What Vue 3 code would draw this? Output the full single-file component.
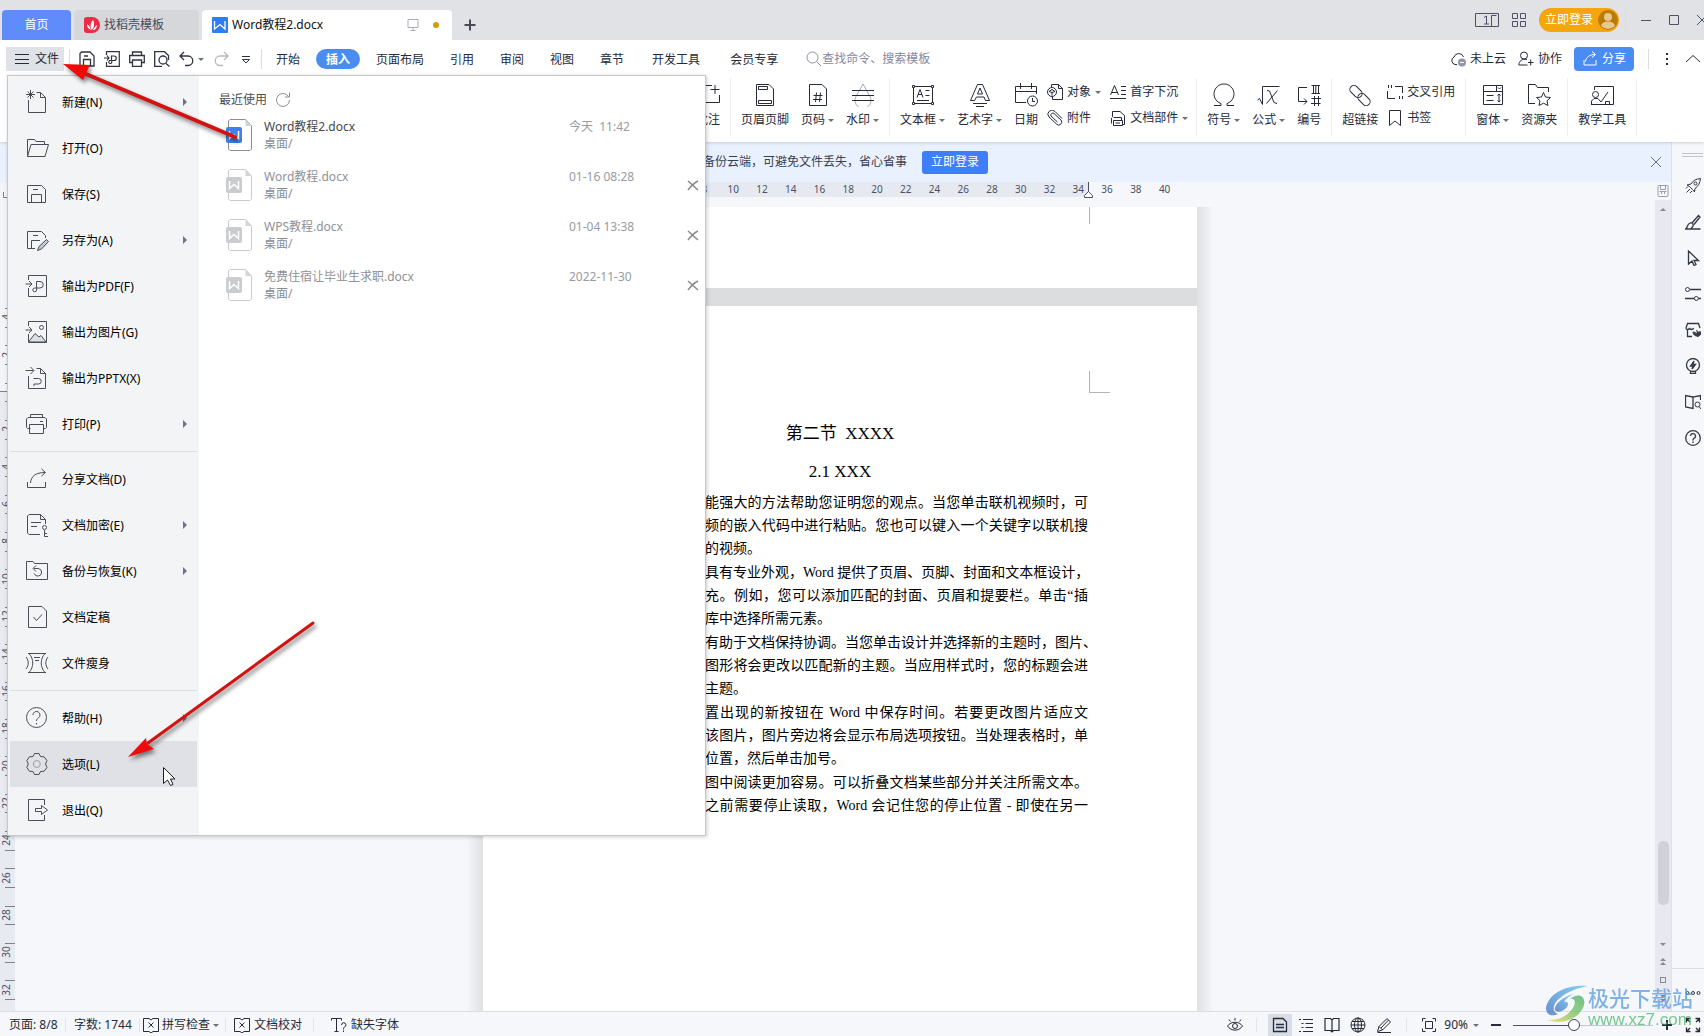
<script setup>
import { h } from 'vue'

const box = 'M3.5 6V1.5H21.5V22.5H3.5V14M.5 10H7M4 7L7 10L4 13'
const icons = {
  // file menu, 24px grid
  new: '<path d="M3.5 10V22.5H20.5V7.5L15.5 2.5H11.5M15.5 2.5V7.5H20.5M5.5 0V9M1 4.5H10M2.5 1.5L8.5 7.5M8.5 1.5L2.5 7.5"/>',
  open: '<path d="M2.5 20.5V3.5H9.5L11 5.5H19.5V8.5M2.5 20.5L6 8.5H23.5L20 20.5Z"/>',
  save: '<path d="M2.5 3.5H16.5L20.5 7.5V20.5H2.5ZM6.5 20.5V12.5H16.5V20.5M8 7.5H13"/>',
  saveas: '<path d="M10 20.5H2.5V3.5H16.5L20.5 7.5V10M6.5 20.5V12.5H15M8 7.5H13"/><path fill="#c5cad6" d="M12.5 22.5L14 18.5L21.5 11.5L23.5 13.5L16.5 21Z"/>',
  pdf: `<path d="${box}M11.5 13V7.5H15a3 3 0 0 1 0 6.5H9.8a1.9 1.9 0 1 0 1.8 2V13"/>`,
  pic: `<path fill="#dcdfe3" d="M3.5 22L10 13.5L14 17L16 15.5L21 22Z"/><path d="${box}"/><circle cx="16.5" cy="7.5" r="2"/>`,
  pptx: '<path d="M3.5 10V22.5H20.5V7.5L15.5 2.5H11.5M15.5 2.5V7.5H20.5M.5 4.5H8.5M5.5 1L9 4.5L5.5 8M8.5 12.5H13.5a2.500 2.500 0 0 1 0 5.500H9V20"/>',
  print: '<path d="M5.5 6V2.5H17.5V6M5.5 16.5H2.5L1.5 15.5V7L3 5.5H20L21.5 7V15.5L20.5 16.5H18.5M4.5 12.5H18.5V21.5H4.5ZM15 9.5H18"/>',
  share: '<path d="M2.5 15V20.5H20.5V15M5.5 16C6 9 11 5.5 20 5.5M16.5 2L20.5 5.5L16.5 9"/>',
  lock: '<path d="M15 21.5H4L2.5 20V3L4 1.5H15.5L20.5 6.5V11M15.5 1.5V6.5H20.5M6 9.5H16M6 13.5H12M19.5 17V23.5H23M19.5 20.5H22"/><circle cx="19.5" cy="14.5" r="2"/>',
  backup: '<path d="M1.5 20.5V2.5H8L9.5 4.5H22.5V20.5ZM9 9.500H13a3.800 3.800 0 1 1-3.800 5M11 6.500L8 9.500L11 12.500"/>',
  final: '<path d="M3.5 1.5H17L21.5 6V22.5H3.5ZM8.5 12L11.5 15.5L17 9.5"/>',
  slim: '<path d="M3 2.5H21M3 21.5H21M4 2.5C9 8 9 16 4 21.5M20 2.5C15 8 15 16 20 21.5M1 6C4 10 4 14 1 18M23 6C20 10 20 14 23 18M9 6.5H15M10 9.5H14"/>',
  help: '<circle cx="11.5" cy="11.5" r="10"/><path d="M8 9a3.5 3.5 0 1 1 5.5 2.8C12 13 11.5 13.5 11.500 15M11.500 17V18.500"/>',
  gear: '<path d="M9.500 1.500H14L15.500 4.500L19 4.800L22 8.500L20.500 12L22 15.500L19 19.300L15.500 19.500L14 22.500H9.500L8 19.500L4.500 19.300L1.800 15.500L3.300 12L1.800 8.500L4.500 4.800L8 4.500Z"/><circle cx="11.800" cy="12" r="3.500" stroke="#9a9ea6"/>',
  exit: '<path d="M19.500 7V1.500H3.500V22.500H19.500V17M10.500 10.500H16.500V7.500L22.500 12L16.500 16.500V13.500H10.500Z"/>',
  // ribbon, 24px grid
  note: '<path d="M16 2.500H1.500V19.500H23.500V12M14.500 6.500H23.500M19 2V11"/>',
  headfoot: '<path d="M3.500 1.500H16L20.500 6V22.500H3.500ZM5.500 3.500H14.500V6.500H5.500ZM5.500 17.500H18.500V20.500H5.500Z"/>',
  pageno: '<path d="M3.500 1.500H16L20.500 6V22.500H3.500ZM10.500 9.500L9.500 19M14.500 9.500L13.500 19M7.500 12.500H16.500M7 16.500H16"/>',
  water: '<path stroke="#a3a6ad" d="M12 1L19 13.500a8 8 0 1 1-14 0Z"/><path d="M1 7.500H23M1 12.500H23M1 17.500H23"/>',
  textbox: '<path d="M2.500 3.500H21.500V20.500H2.500ZM6 14.500L9 6.500L12 14.500M7 11.500H11M14.500 7.500H18.500M14.500 12.500H18.500M6 17.500H18"/><path fill="#fff" d="M1.500 2.500h2v2h-2zM20.500 2.500h2v2h-2zM1.500 19.500h2v2h-2zM20.500 19.500h2v2h-2z"/>',
  art: '<path d="M9.500 1.500H14.500L21.500 17.500H17.500L16 14H8.500L6.500 17.500H2.500ZM12 5L9.500 11H14.500ZM5 20.500H19M8 23.500H16"/>',
  date: '<path d="M12 19.500H1.500V3.500H22.500V11M1.500 8.500H22.500M6.500 0V6M17.500 0V6M18.500 15V18.500H21"/><circle cx="18.500" cy="18" r="5"/>',
  omega: '<path d="M2 22.500H9V20.500A10 10 0 1 1 15 20.500V22.500H22"/>',
  formula: '<path d="M.5 17L2.500 15.500L5.500 21.500V3.500H22.500M10 7.500L12.500 8L17 19.500L20 20.500M20.500 7.500L9.500 20.500"/>',
  number: '<path d="M10 4.500H1.500V18.500H10M7 15.500L10 18.500L7 21.500M14.500 2.500H23M14.500 10.500H23M16.500 2.500V10.500M18.800 2.500V10.500M21.500 2.500V10.500M17.500 13V23M21.500 13V23M14.500 15.500H24M14 20.500H23.500"/>',
  link: '<rect x="-4" y="-7" width="8" height="14" rx="4" transform="translate(8 8.500) rotate(-45)"/><rect x="-4" y="-7" width="8" height="14" rx="4" transform="translate(16 16.500) rotate(-45)"/>',
  form: '<path d="M2.500 2.500H21.500V21.500H2.500ZM2.500 8.500H21.500M15.500 2.500V8.500M17 4.500L18.500 6L20 4.500M5.500 12.500H12.500M5.500 17.500H12.500M18 11.500V19M16.500 12.500L18 11L19.500 12.500M16.500 17.500L18 19L19.500 17.500"/>',
  res: '<path d="M8 20.500H1.500V1.500H8.500L10.500 4.500H21.500V9M16.500 9.500L18.500 14L23.500 14.500L20 17.800L21 22.500L16.500 20.200L12 22.500L13 17.800L9.500 14.500L14.500 14Z"/>',
  teach: '<path d="M4.500 7V3.500H23.500V21.500H12M1.500 21.500V18L4 15.500H8L11 19L18 9M15.500 21V18.500H19.500V21M1 21.500H12"/><circle cx="5.500" cy="11.500" r="3"/>',
  // 16px grid
  object: '<path d="M4.500 3V.5H11.500L15.500 4.500V15.500H5.500V13M11.500 .5V4.500H15.500M5 5.500L2 7.500M5 5.500L8 7.500M5 8.500V11.500M5 8.500L2 7.500M5 8.500L8 7.500"/><circle cx="5" cy="8" r="4.500"/>',
  clip: '<path d="M15 8.500L8 1.500A4 4 0 0 0 2 7L9.500 14A3 3 0 0 0 14 10L7 3.500A2 2 0 0 0 4 6L10.500 12"/>',
  dropcap: '<path d="M.5 11L4.500 1.500L8.500 11M2 8.500H7M11 2.500H16M11 6.500H16M11 10.500H16M0 14.500H16"/>',
  parts: '<path d="M2.500 7V1.500H10L14.500 5.500V14.500H12M3.500 7.500H11.500V10M3.500 10.500V15.500H12.500V10.500ZM1.500 8V13.500M5.500 13H10"/>',
  cross: '<path d="M8 2.500H15.500V9M.5 7V14.500H8M1.500 1V4M4.500 1V4M12.500 12V15M15.500 12V15"/>',
  bookmark: '<path d="M2.500 .5H13.500V15.500L8 11L2.500 15.500Z"/>',
  qsave: '<path d="M1 2.500L2.500 1H11L15 5V15H1ZM4.500 15V8.500H11.500V15M5 5H9" stroke-width="1.300"/>',
  qpdf: '<path d="M2.500 4V.7H15.300V15.300H2.500V11M0 7H5M3 4.500L5 7L3 9.500M7.500 9V5H10a2 2 0 0 1 0 4.500H6.500a1.500 1.500 0 1 0 1.300 1.500V9" stroke-width="1.200"/>',
  qprint: '<path d="M3.500 4.500V1H12.500V4.500M3.500 11.500H.7V4.500H15.300V11.500H12.500M3.500 9H12.500V15.300H3.500Z" stroke-width="1.300"/>',
  preview: '<path d="M8 15.300H.7V.7H10.500L14.500 4.500V9M12 12.500L15.500 15.500" stroke-width="1.300"/><circle cx="9" cy="9" r="4" stroke-width="1.300"/>',
  undo: '<path d="M5 1L1 5L5 9M1.500 5H9a4.500 4.500 0 0 1 0 9.500H6" stroke-width="1.300"/>',
  redo: '<path d="M11 1L15 5L11 9M14.500 5H7a4.500 4.500 0 0 0 0 9.500H10" stroke-width="1.300"/>',
  more: '<path d="M4 5.500H12M4.500 8.500H11.500L8 12Z"/>',
  burger: '<path d="M1 3.500H15M1 8.500H15M1 12.500H15"/>',
  search: '<circle cx="6.500" cy="6.500" r="5.500"/><path d="M10.500 10.500L15 15"/>',
  cloud: '<path d="M7 13.500H5A4 4 0 0 1 4 6A5 5 0 0 1 13.500 6"/><circle cx="12" cy="11.500" r="4" fill="#9095a8" stroke="none"/><path stroke="#fff" d="M10 11.500H14"/>',
  coop: '<circle cx="6" cy="4.500" r="3.500"/><path d="M9 8.500C4 7.500 1 10 .8 14H9.500M10 11.500H15.500M12.700 8.500V14.500"/>',
  shareup: '<path d="M2 9V14H14V9M3.500 10.500C4 6 8 3.500 13 3.500M10 .5L13.500 3.500L10 6.500"/>',
  dots: '<path stroke-width="2" d="M7 3H9M7 8H9M7 13H9"/>',
  up: '<path d="M1 11L8 4.500L15 11"/>',
  plus: '<path stroke-width="2" d="M2.500 8H13.500M8 2.500V13.500"/>',
  splus: '<path stroke-width="2" d="M3 8H13M8 3V13"/>',
  sminus: '<path stroke-width="2" d="M3 8H13"/>',
  screen: '<path d="M3 2.500H13V10.500H3ZM8 10.500V13.500M5.500 13.500H10.500"/>',
  apps: '<path d="M1.500 1.500h5v5h-5zM9.500 1.500h5v5h-5zM1.500 9.500h5v5h-5zM9.500 9.500h5v5h-5z"/>',
  min: '<path d="M3 8.500H13"/>',
  max: '<path d="M3.500 3.500H12.500V12.500H3.500Z"/>',
  close: '<path d="M3 3L13 13M13 3L3 13"/>',
  refresh: '<path d="M13.500 4.500A6.500 6.500 0 1 0 14.500 8M14.500 .5V5H10"/>',
  remove: '<path stroke-width="1.500" d="M3 4L13 13M13 4C9 6 6 9 3 13"/>',
  rocket: '<path d="M6 6C8 2.500 11 1 15.500 .5C15 5 13.500 8 10 10.500L9.500 14L7.500 11.500L4.500 8.500L2 7ZM1 10.500L3 8.500M1.500 14.500L5 11M5 15L7 13"/><circle cx="10.500" cy="5.500" r="1.500"/>',
  brush: '<path stroke-width="1.300" d="M7 9L13.500 1.500L15 3L9 10.500M1 14.500C3 13 2 10 5 9C8 8.500 9.500 11 7 13.500L6 14.500M0 15H15.500"/>',
  arrow: '<path stroke-width="1.300" d="M3.500 1V14L7 11L9 15.500L11 14.500L9 10.500H13.500Z"/>',
  sliders: '<path stroke-width="1.300" d="M5 3.500H16M0 12.500H9M13.500 12.500H16"/><circle cx="2.500" cy="3.500" r="2"/><circle cx="11.300" cy="12.500" r="2"/>',
  store: '<path stroke-width="1.300" d="M2.500 7V14.500H7M1 6L2.500 1.500H13.500L15 6M1 6C1 8 4 8 4.500 6C5 8 8 8 8.500 6"/><path fill="#3a3d4a" d="M11.500 8C13 10 13 11 12 14C10 14 8 12.500 8 10C10 10 11 11 11.500 12C12.500 10 14 9.500 16 10C16 13 14 14.500 12 14.500"/>',
  bulb: '<circle cx="8" cy="7" r="6.500" stroke-width="1.300"/><path stroke-width="1.300" d="M5.500 13V15.500H10.500V13M9 3L5.500 8H8L7 11L10.500 6.500H8Z"/>',
  booksearch: '<path stroke-width="1.300" d="M8 3L.5 1.500V13L8 14.500V3L15.500 1.500V6"/><circle cx="12.500" cy="10.500" r="2.500"/><path d="M14 12.500L16 15"/>',
  qmark: '<circle cx="8" cy="8" r="7.300" stroke-width="1.300"/><path stroke-width="1.300" d="M5.500 6a2.500 2.500 0 1 1 3.500 2.400C8 9 8 9.500 8 10.500M8 11.500V13"/>',
  ellipsis: '<circle cx="2.500" cy="8" r="1.500"/><circle cx="8" cy="8" r="1.500"/><circle cx="13.500" cy="8" r="1.500"/>',
  spell: '<path d="M6 1.500H.5V14.500H6L8 16L10 14.500H15.500V1.500H10L8 3L6 1.500M5.500 5.500L10.500 10.500M10.500 5.500L5.500 10.500"/>',
  font: '<path d="M.5 3.500V1.500H10.500V3.500M5.500 1.500V14.500M3.500 14.500H7.500M10.500 8a2.200 2.200 0 1 1 3 2C12.500 10.500 12.500 11 12.500 12.500M12.500 13.500V15"/>',
  eye: '<path d="M.5 9C4 4 12 4 15.500 9C12 14.500 4 14.500 .5 9ZM8 1V3.500M2 2.500L3.500 4.500M14 2.500L12.500 4.500"/><circle cx="8" cy="9" r="2.500"/>',
  vpage: '<path stroke-width="1.300" d="M1.500 1.500H11L14.500 5V14.500H1.500ZM4 7.500H12M4 10.500H12"/>',
  outline: '<path d="M1 2.500H3M5 2.500H15M3.500 6.500H5.500M7.500 6.500H15M3.500 10.500H5.500M7.500 10.500H15M1 14.500H3M5 14.500H15"/>',
  read: '<path stroke-width="1.200" d="M6.500 1.500H1V13.500H6.500L8 15L9.500 13.500H15V1.500H9.500L8 3ZM8 3V14"/>',
  globe: '<circle cx="8" cy="8" r="7"/><ellipse cx="8" cy="8" rx="3.500" ry="7"/><path d="M8 1V15M1 8H15M2 4.500H14M2 11.500H14"/>',
  pen: '<path d="M1.500 14.500L3 9.500L11 1.500L14.500 5L6.500 13ZM3 9.500L6.500 13M5 11L12.500 3M1.500 15.500H15"/>',
  fit: '<path d="M1.500 4.500V1.500H4.500M11.500 1.500H14.500V4.500M14.500 11.500V14.500H11.500M4.500 14.500H1.500V11.500M4.500 4.500H11.500V11.500H4.500Z"/>',
  full: '<path stroke-width="1.300" d="M1.500 5.500V1.500H5.500M1.500 1.500L5 5M10.500 1.500H14.500V5.500M14.500 1.500L11 5M14.500 10.500V14.500H10.500M14.500 14.500L11 11M5.500 14.500H1.500V10.500M1.500 14.500L5 11"/>',
  scrollicon: '<rect x="3" y="2.500" width="10" height="11" rx="1"/><path d="M4.500 8.500H11.500M6.500 8.500V11M9.500 8.500V11M5.500 3V6.500H10.500V3"/>'
}

const Icon = (props) =>
  h('svg', {
    width: props.s || 16,
    height: props.s || 16,
    viewBox: `0 0 ${props.s || 16} ${props.s || 16}`,
    fill: 'none',
    stroke: 'currentColor',
    'aria-hidden': 'true',
    innerHTML: icons[props.n]
  })
Icon.props = ['n', 's']

const fileMenu = [
  [
    { i: 'new', t: '新建(N)', sub: true },
    { i: 'open', t: '打开(O)' },
    { i: 'save', t: '保存(S)' },
    { i: 'saveas', t: '另存为(A)', sub: true },
    { i: 'pdf', t: '输出为PDF(F)' },
    { i: 'pic', t: '输出为图片(G)' },
    { i: 'pptx', t: '输出为PPTX(X)' },
    { i: 'print', t: '打印(P)', sub: true }
  ],
  [
    { i: 'share', t: '分享文档(D)' },
    { i: 'lock', t: '文档加密(E)', sub: true },
    { i: 'backup', t: '备份与恢复(K)', sub: true },
    { i: 'final', t: '文档定稿' },
    { i: 'slim', t: '文件瘦身' }
  ],
  [
    { i: 'help', t: '帮助(H)', sub: true },
    { i: 'gear', t: '选项(L)', active: true },
    { i: 'exit', t: '退出(Q)' }
  ]
]

const recent = [
  { name: 'Word教程2.docx', date: '今天\u00a0 11:42', live: true },
  { name: 'Word教程.docx', date: '01-16 08:28' },
  { name: 'WPS教程.docx', date: '01-04 13:38' },
  { name: '免费住宿让毕业生求职.docx', date: '2022-11-30' }
]

const tabs = [
  { t: '开始' },
  { t: '插入', on: true },
  { t: '页面布局' },
  { t: '引用' },
  { t: '审阅' },
  { t: '视图' },
  { t: '章节' },
  { t: '开发工具', wide: true },
  { t: '会员专享', wide: true }
]

const ribbon = [
  [{ i: 'note', t: '批注' }],
  [{ i: 'headfoot', t: '页眉页脚' }, { i: 'pageno', t: '页码', d: 1 }, { i: 'water', t: '水印', d: 1 }],
  [
    { i: 'textbox', t: '文本框', d: 1 },
    { i: 'art', t: '艺术字', d: 1 },
    { i: 'date', t: '日期' },
    { pair: [{ i: 'object', t: '对象', d: 1 }, { i: 'clip', t: '附件' }] },
    { pair: [{ i: 'dropcap', t: '首字下沉' }, { i: 'parts', t: '文档部件', d: 1 }] }
  ],
  [{ i: 'omega', t: '符号', d: 1 }, { i: 'formula', t: '公式', d: 1 }, { i: 'number', t: '编号' }],
  [{ i: 'link', t: '超链接' }, { pair: [{ i: 'cross', t: '交叉引用' }, { i: 'bookmark', t: '书签' }] }],
  [{ i: 'form', t: '窗体', d: 1 }, { i: 'res', t: '资源夹' }],
  [{ i: 'teach', t: '教学工具' }]
]

const rulerNumbers = Array.from({ length: 17 }, (_, k) => 8 + k * 2)

const zero = 210
const unit = 18.68
const vNumbers = Array.from({ length: 19 }, (_, k) => (k - 2) * 2)
  .filter((n) => n !== 0)
  .map((n) => ({ label: Math.abs(n), y: Math.round(zero + n * unit) }))
const vTicks = Array.from({ length: 38 }, (_, k) => Math.round(zero + (k - 4.5) * unit) + 0.5)

const paragraphs = [
  ['能强大的方法帮助您证明您的观点。当您单击联机视频时，可', '频的嵌入代码中进行粘贴。您也可以键入一个关键字以联机搜', '的视频。'],
  ['具有专业外观，Word 提供了页眉、页脚、封面和文本框设计，', '充。例如，您可以添加匹配的封面、页眉和提要栏。单击“插', '库中选择所需元素。'],
  ['有助于文档保持协调。当您单击设计并选择新的主题时，图片、', '图形将会更改以匹配新的主题。当应用样式时，您的标题会进', '主题。'],
  ['置出现的新按钮在 Word 中保存时间。若要更改图片适应文', '该图片，图片旁边将会显示布局选项按钮。当处理表格时，单', '位置，然后单击加号。'],
  ['图中阅读更加容易。可以折叠文档某些部分并关注所需文本。', '之前需要停止读取，Word 会记住您的停止位置 - 即使在另一']
]

const tools = ['rocket', 'brush', 'arrow', 'sliders', 'store', 'bulb', 'booksearch', 'qmark']
</script>

<template>
  <div class="app">
    <header class="titlebar">
      <button class="tab home">首页</button>
      <button class="tab docer">
        <svg width="16" height="16" viewBox="0 0 16 16"><path d="M3 0H8A8 8 0 0 1 8 16H3Q0 16 0 13V3Q0 0 3 0Z" fill="#ec2b45" /><path d="M8 13C6 11 6 6 9 3C11 6 10 11 8 13ZM7 13C4 12 3 10 3 7C5 8 6 10 7 13ZM9 13C10 11 11 9 13 8C13 11 11 13 9 13Z" fill="#fff" /></svg>
        找稻壳模板
      </button>
      <button class="tab current">
        <svg width="16" height="16" viewBox="0 0 16 16"><rect width="16" height="16" rx="1" fill="#2f7df0" /><path d="M2.500 4V12L8 7.500L13 12V4" fill="none" stroke="#fff" stroke-width="1.300" /></svg>
        <span>Word教程2.docx</span>
        <Icon n="screen" class="screen" />
        <i class="unsaved"></i>
      </button>
      <button class="plain add" aria-label="新建标签"><Icon n="plus" /></button>
      <div class="window">
        <button class="plain" aria-label="单页显示">
          <svg width="24" height="14" viewBox="0 0 24 14" fill="none" stroke="#4c5166"><path d="M.5 .5H23.500V13.500H.5ZM16.500 2.500H21.500M16.500 2.500V13M9 4.500L11.500 3V11M9 11H14" /></svg>
        </button>
        <button class="plain" aria-label="应用"><Icon n="apps" /></button>
        <button class="login">立即登录
          <svg width="20" height="20" viewBox="0 0 20 20"><circle cx="10" cy="10" r="10" fill="#b97a08" /><circle cx="10" cy="7" r="4" fill="#e8c88c" /><path d="M3 16Q4 11.500 10 11.500T17 16Q10 22 3 16Z" fill="#e8c88c" /></svg>
        </button>
        <i class="bar"></i>
        <button class="plain" aria-label="最小化"><Icon n="min" /></button>
        <button class="plain" aria-label="最大化"><Icon n="max" /></button>
        <button class="plain" aria-label="关闭"><Icon n="close" /></button>
      </div>
    </header>

    <nav class="menubar">
      <button class="file"><Icon n="burger" />文件</button>
      <i class="bar"></i>
      <div class="quick">
        <button class="plain" aria-label="保存"><Icon n="qsave" /></button>
        <button class="plain" aria-label="输出为PDF"><Icon n="qpdf" /></button>
        <button class="plain" aria-label="打印"><Icon n="qprint" /></button>
        <button class="plain" aria-label="打印预览"><Icon n="preview" /></button>
        <button class="plain undo" aria-label="撤销"><Icon n="undo" /><i class="caret"></i></button>
        <button class="plain faded" aria-label="恢复"><Icon n="redo" /></button>
        <button class="plain" aria-label="更多"><Icon n="more" /></button>
      </div>
      <i class="bar"></i>
      <div class="tabs">
        <button v-for="t in tabs" :key="t.t" :class="{ on: t.on, wide: t.wide }">{{ t.t }}</button>
      </div>
      <label class="search"><Icon n="search" /><input type="text" placeholder="查找命令、搜索模板" aria-label="查找命令" /></label>
      <div class="account">
        <button class="plain"><Icon n="cloud" />未上云</button>
        <button class="plain"><Icon n="coop" />协作</button>
        <button class="sharebtn"><Icon n="shareup" />分享</button>
        <i class="bar"></i>
        <button class="plain" aria-label="更多选项"><Icon n="dots" /></button>
        <button class="plain" aria-label="收起功能区"><Icon n="up" /></button>
      </div>

      <section class="popup">
        <div class="commands">
          <div v-for="(g, k) in fileMenu" :key="k" class="cmdgroup">
            <button v-for="c in g" :key="c.t" :class="{ active: c.active }">
              <Icon :n="c.i" :s="24" />
              <span>{{ c.t }}</span>
              <i v-if="c.sub" class="sub"></i>
            </button>
          </div>
        </div>
        <div class="recent">
          <h2>最近使用 <Icon n="refresh" /></h2>
          <ul>
            <li v-for="r in recent" :key="r.name" :class="{ live: r.live }">
              <svg class="doc" width="26" height="32" viewBox="0 0 26 32">
                <path d="M2.500 2L4 .5H19.500L25.500 7V30L24 31.500H4L2.500 30Z" fill="#fff" class="sheet" />
                <path d="M19.500 .5V7H25.500Z" fill="#d4d5d8" />
                <rect y="8" width="16" height="16" rx="2" class="tile" />
                <path d="M3.500 12V19.500L8 15.500L12.500 19.500V12" fill="none" stroke="#fff" stroke-width="1.500" />
              </svg>
              <div class="names"><span>{{ r.name }}</span><span class="path">桌面/</span></div>
              <time>{{ r.date }}</time>
              <button v-if="!r.live" class="plain" aria-label="移除"><Icon n="remove" /></button>
            </li>
          </ul>
        </div>
      </section>
    </nav>

    <div class="ribbon">
      <div v-for="(g, k) in ribbon" :key="k" class="group">
        <template v-for="(b, j) in g" :key="j">
          <div v-if="b.pair" class="pair">
            <button v-for="p in b.pair" :key="p.t"><Icon :n="p.i" />{{ p.t }}<i v-if="p.d" class="caret"></i></button>
          </div>
          <button v-else class="big"><Icon :n="b.i" :s="24" /><span>{{ b.t }}<i v-if="b.d" class="caret"></i></span></button>
        </template>
      </div>
    </div>

    <div class="work">
      <div class="main">
        <div class="banner">
          <span>备份云端，可避免文件丢失，省心省事</span>
          <button>立即登录</button>
          <button class="plain dismiss" aria-label="关闭提示"><Icon n="close" /></button>
        </div>
        <div class="editor">
          <svg class="vruler" width="15" height="100%">
            <rect y="210" width="15" height="100%" fill="#e8eaf1" />
            <path d="M0 209.500H15M3.500 10V15.500H7" fill="none" stroke="#7c8190" />
            <path v-for="y in vTicks" :key="y" :d="`M5 ${y}H15`" stroke="#7c8190" />
            <text v-for="n in vNumbers" :key="n.y" :transform="`translate(10 ${n.y}) rotate(-90)`" text-anchor="middle">{{ n.label }}</text>
          </svg>
          <div class="canvas">
            <div class="hruler">
              <div class="measure">
                <div class="numbers"><span v-for="n in rulerNumbers" :key="n">{{ n }}</span></div>
                <svg class="indent" width="9" height="16" viewBox="0 0 9 16"><path d="M4.500 0V10M.5 15.500V13.500L4.500 9.500L8.500 13.500V15.500Z" fill="#fff" stroke="#4c5166" /></svg>
              </div>
            </div>
            <div class="pages">
              <i class="shade left"></i>
              <div class="sheets">
                <article class="page first"><i class="mark"></i></article>
                <article class="page">
                  <i class="mark corner"></i>
                  <h1>第二节&nbsp; XXXX</h1>
                  <h3>2.1 XXX</h3>
                  <div class="text">
                    <p v-for="(p, k) in paragraphs" :key="k">
                      <span v-for="l in p" :key="l" :class="{ filled: l.length > 20 }">{{ l }}</span>
                    </p>
                  </div>
                </article>
              </div>
              <i class="shade right"></i>
            </div>
          </div>
          <div class="scroll">
            <Icon n="scrollicon" class="sico" />
            <div class="track">
              <i class="tri"></i>
              <i class="thumb"></i>
              <i class="tri down"></i>
              <span class="dbl"><i class="tri"></i><i class="tri"></i></span>
              <i class="sq"></i>
              <span class="dbl"><i class="tri down"></i><i class="tri down"></i></span>
            </div>
          </div>
        </div>
      </div>
      <aside class="tools">
        <i class="grip"></i>
        <button v-for="t in tools" :key="t" class="plain" :aria-label="t"><Icon :n="t" /></button>
        <button class="plain last" aria-label="更多工具"><Icon n="ellipsis" /></button>
      </aside>
    </div>

    <footer class="status">
      <span class="first">页面: 8/8</span><i class="bar"></i>
      <span class="count">字数: 1744</span><i class="bar"></i>
      <button class="plain check"><Icon n="spell" />拼写检查<i class="caret"></i></button><i class="bar"></i>
      <button class="plain proof"><Icon n="spell" />文档校对</button><i class="bar"></i>
      <button class="plain fonts"><Icon n="font" />缺失字体</button>
      <div class="views">
        <button class="plain eye" aria-label="护眼模式"><Icon n="eye" /></button><i class="bar"></i>
        <button class="plain view on" aria-label="页面视图"><Icon n="vpage" /></button>
        <button class="plain view" aria-label="大纲"><Icon n="outline" /></button>
        <button class="plain view" aria-label="阅读版式"><Icon n="read" /></button>
        <button class="plain view" aria-label="Web版式"><Icon n="globe" /></button>
        <button class="plain view" aria-label="写作模式"><Icon n="pen" /></button>
        <i class="bar"></i>
        <button class="plain" aria-label="适合页面"><Icon n="fit" /></button>
        <button class="plain zoom">90%<i class="caret"></i></button>
        <button class="plain" aria-label="缩小"><Icon n="sminus" /></button>
        <input type="range" min="0" max="100" value="43" aria-label="缩放" />
        <button class="plain" aria-label="放大"><Icon n="splus" /></button>
        <button class="plain fullscreen" aria-label="全屏"><Icon n="full" /></button>
      </div>
    </footer>

    <div class="brand">
      <svg width="44" height="42" viewBox="0 0 44 42">
        <defs>
          <linearGradient id="swirlBlue" x1="0" y1="1" x2="1" y2="0"><stop offset="0" stop-color="#3f6fc4" /><stop offset="1" stop-color="#59c3ee" /></linearGradient>
          <linearGradient id="swirlGreen" x1="0" y1="1" x2="1" y2="0"><stop offset="0" stop-color="#f0d84a" /><stop offset=".5" stop-color="#7cc35a" /><stop offset="1" stop-color="#3fae6a" /></linearGradient>
        </defs>
        <path d="M44 2C22 0 4 10 2 24C2 31 8 33 14 30C8 28 8 20 16 14C24 7 34 4 44 2Z" fill="url(#swirlBlue)" />
        <path d="M30 10C20 12 10 20 11 26C13 29 19 28 23 23C25 20 24 17 20 18C22 14 26 12 30 10Z" fill="url(#swirlBlue)" />
        <path d="M3 36C16 37 26 30 30 22C32 17 30 14 26 15C34 8 42 12 40 21C37 33 20 42 3 36Z" fill="url(#swirlGreen)" />
      </svg>
      <div><strong>极光下载站</strong><span>www.xz7.com</span></div>
    </div>

    <svg class="pointers" width="340" height="800" viewBox="0 0 340 800">
      <g class="arrows">
        <path d="M235 137L86 74" stroke="#d31212" stroke-width="4" stroke-linecap="round" />
        <path d="M63 64L90 65L86 73L83 80Z" fill="#f00a0a" />
        <path d="M313 623L148 743" stroke="#d31212" stroke-width="3" stroke-linecap="round" />
        <path d="M128 757L146 738L147 744L154 749Z" fill="#f00a0a" />
      </g>
      <path d="M163.500 767.500V783.500L167.500 780L170.500 785.500L173 784.500L170.500 779H175Z" fill="#fff" stroke="#1a1d29" />
    </svg>
  </div>
</template>

<style>
body { margin: 0; overflow: hidden; }
</style>

<style scoped>
.app {
  position: relative;
  display: flex;
  flex-direction: column;
  height: 100vh;
  overflow: hidden;
  background: #f5f7fa;
  color: #262a3a;
  font: 12px/16px "Noto Sans", "Noto Sans CJK SC", sans-serif;
}
.app * { box-sizing: border-box; }
svg { flex: none; display: block; }
button {
  display: flex;
  align-items: center;
  padding: 0;
  border: 0;
  background: none;
  color: inherit;
  font: inherit;
  white-space: nowrap;
}
.plain { gap: 4px; }
.bar { flex: none; width: 1px; height: 20px; background: #dadce0; }
.caret {
  display: inline-block;
  flex: none;
  margin-left: 3px;
  border: solid transparent;
  border-width: 3px 3px 0;
  border-top-color: #6b7080;
  vertical-align: middle;
}

.titlebar {
  display: flex;
  align-items: flex-end;
  flex: none;
  height: 40px;
  padding-left: 2px;
  gap: 3px;
  background: #e1e2e6;
}
.tab { height: 30px; border-radius: 4px 4px 0 0; }
.home { width: 69px; justify-content: center; background: #608cfb; color: #fff; }
.docer { width: 125px; padding-left: 10px; gap: 4px; background: #d6d7db; color: #464b5a; }
.current { width: 250px; padding: 0 13px 0 10px; gap: 4px; background: #fff; color: #111; }
.screen { margin: 0 8px 0 auto; color: #a9acb5; }
.unsaved { width: 6px; height: 6px; border-radius: 50%; background: #d29a0c; }
.add { height: 30px; margin-left: 7px; color: #444a58; }
.window {
  display: flex;
  align-items: center;
  gap: 12px;
  height: 40px;
  margin: 0 -6px 0 auto;
  color: #4c5166;
}
.window .bar { margin-left: -6px; }
.login { gap: 5px; width: 80px; height: 24px; padding-left: 6px; border-radius: 12px; background: #f5a60c; color: #fff; }

.menubar {
  position: relative;
  z-index: 5;
  display: flex;
  align-items: center;
  flex: none;
  height: 38px;
  padding-left: 6px;
  background: #fff;
}
.file { gap: 5px; width: 58px; height: 24px; padding-left: 8px; margin-right: 5px; background: #dfe2e6; }
.quick { display: flex; align-items: center; gap: 9px; margin: 0 7px 0 9px; color: #2f3442; }
.quick .faded { color: #b5b8bf; }
.quick .undo { gap: 0; }
.tabs { display: flex; gap: 6px; margin-left: 4px; }
.tabs button { height: 20px; padding: 1px 10px 0; border-radius: 10px; }
.tabs .wide { padding: 1px 12px 0; }
.tabs .on { background: #4a8cf2; color: #fff; font-weight: 700; }
.search { display: flex; align-items: center; margin-left: 16px; color: #8b90a0; }
.search input { width: 124px; padding: 0; border: 0; outline: 0; background: none; font: inherit; }
.search input::placeholder { color: #7f88a3; opacity: 1; }
.account { display: flex; align-items: center; gap: 12px; margin: 0 3px 0 auto; }
.account .bar { margin: 0 -2px 0 2px; }
.account .plain:last-child { margin-left: -2px; }
.sharebtn { justify-content: center; gap: 4px; width: 60px; height: 24px; border-radius: 4px; background: #4a8cf2; color: #fff; }

.popup {
  position: absolute;
  top: 35px;
  left: 7px;
  display: flex;
  width: 699px;
  border: 1px solid #c6c8cb;
  background: #fff;
  box-shadow: 1px 1px 4px rgba(0, 0, 0, 0.2);
}
.commands { width: 191px; padding: 3px 2px 2px; background: #f3f4f5; color: #000; }
.cmdgroup + .cmdgroup { margin-top: 4px; padding-top: 4px; border-top: 1px solid #dcdee0; }
.cmdgroup button { width: 100%; height: 46px; padding: 0 10px 0 15px; gap: 13px; text-align: left; }
.cmdgroup span { padding-top: 2px; }
.cmdgroup svg { color: #4a4d55; }
.cmdgroup .active { background: #dfe1e6; }
.sub { margin-left: auto; border: solid transparent; border-width: 4px 0 4px 4px; border-left-color: #6b7288; }
.recent { flex: 1; padding: 14px 4px 0 20px; }
.recent h2 { display: flex; align-items: center; gap: 8px; margin: 0; font-size: 12px; line-height: 19px; font-weight: 400; color: #4c4e54; }
.recent h2 svg { color: #8a8c92; }
.recent ul { margin: 0; padding: 0; list-style: none; }
.recent li { display: flex; align-items: flex-start; height: 50px; padding: 9px 0 0 7px; color: #8f9196; }
.recent li.live { color: #45474c; }
.doc { margin-top: 1px; }
.sheet { stroke: #c9cacd; }
.tile { fill: #cbccd0; }
.live .sheet { stroke: #8b8d93; }
.live .tile { fill: #3f82ee; }
.names { display: flex; flex-direction: column; flex: none; width: 317px; padding-left: 12px; line-height: 17px; }
.path { color: #8a8c91; }
.recent time { line-height: 17px; color: #999ba0; }
.recent li button { height: 34px; margin-left: auto; color: #8a8b8e; }

.ribbon {
  position: relative;
  z-index: 2;
  display: flex;
  flex: none;
  height: 64px;
  padding-left: 686px;
  background: #fff;
  box-shadow: 0 1px 3px rgba(0, 0, 0, 0.16);
}
.group { display: flex; gap: 12px; height: 58px; padding: 5px 10px 0; border-right: 1px solid #eceef1; }
.big { flex-direction: column; gap: 4px; height: 46px; }
.big span { display: flex; align-items: center; height: 18px; }
.pair { display: flex; flex-direction: column; gap: 10px; margin: 1px 0 0 -3px; }
.pair button { gap: 4px; height: 16px; }
.pair .caret { margin-left: 0; }
.group:nth-child(3) { padding-right: 8px; }

.work { display: flex; flex: 1; min-height: 0; }
.main { display: flex; flex-direction: column; flex: 1; min-width: 0; }
.banner { display: flex; align-items: center; flex: none; height: 40px; padding: 0 7px 0 703px; background: #eaf1fe; color: #3b4050; }
.banner button:not(.plain) { justify-content: center; width: 66px; height: 23px; margin-left: 15px; border-radius: 3px; background: #3f7dfa; color: #fff; }
.banner .dismiss { margin-left: auto; color: #6a7080; }
.editor { display: flex; flex: 1; min-height: 0; }
.vruler { background: #f3f4f8; }
.vruler text { font-size: 10px; fill: #4c5166; }
.canvas { display: flex; flex-direction: column; align-items: center; flex: 1; min-width: 0; padding-left: 10px; }
.hruler { flex: none; width: 714px; height: 25px; }
.measure { position: relative; width: 605px; height: 15px; background: #e6e9f0; }
.numbers { display: grid; grid-template-columns: repeat(17, 1fr); width: 489px; margin-left: 207px; font-size: 10px; line-height: 15px; text-align: center; color: #4c5166; }
.indent { position: absolute; right: -5px; top: 0; }
.pages { display: flex; flex: 1; min-height: 0; }
.shade { width: 17px; }
.left { background: linear-gradient(90deg, #f5f7fa, #e0e1e3); }
.right { background: linear-gradient(90deg, #e0e1e3, #f5f7fa); }
.sheets { display: flex; flex-direction: column; gap: 18px; width: 714px; background: #dcddde; overflow: hidden; }
.page { flex: 1; background: #fff; color: #000; font-family: "Liberation Serif", "Noto Sans CJK SC", serif; }
.page.first { flex: none; height: 81px; }
.mark { display: block; width: 21px; height: 17px; margin-left: 606px; border-left: 1px solid #b3b4b6; }
.corner { height: 22px; margin-top: 65px; border-bottom: 1px solid #b3b4b6; }
.page h1, .page h3 { margin: 24px 0 0; font-size: 17px; line-height: 34px; font-weight: 400; text-align: center; }
.page h3 { margin-top: 4px; }
.text { margin: 2px 109px 0 222px; font-size: 14px; line-height: 23px; white-space: nowrap; }
.text p { margin: 0 0 1px; }
.text span { display: block; }
.text .filled { text-align: justify; text-align-last: justify; }
.scroll { display: flex; flex-direction: column; align-items: center; width: 16px; }
.sico { margin: 1px 0; color: #9a9eae; }
.track { display: flex; flex-direction: column; align-items: center; flex: 1; width: 16px; padding-top: 8px; background: #e8e9f0; }
.tri { border: solid transparent; border-width: 0 3px 3px; border-bottom-color: #858996; }
.tri.down { border-width: 3px 3px 0; border-top-color: #858996; }
.thumb { width: 11px; height: 64px; margin: auto 0 38px; border-radius: 5px; background: #cfd2db; }
.dbl { display: flex; flex-direction: column; gap: 1px; margin: 12px 0; }
.dbl:last-child { margin-bottom: 9px; }
.sq { width: 6px; height: 6px; border: 1px solid #858996; }
.tools {
  display: flex;
  flex-direction: column;
  align-items: center;
  flex: none;
  width: 33px;
  gap: 20px;
  padding: 11px 0 10px 9px;
  border-left: 1px solid #dfe1e8;
  color: #343846;
}
.grip { width: 21px; height: 4px; margin-bottom: 1px; border: solid #c3c5cb; border-width: 1px 0; }
.last { justify-content: center; width: 32px; margin: auto 0 0 -10px; padding: 16px 0 0 10px; border-top: 1px solid #dcdee4; }

.status { display: flex; align-items: center; flex: none; height: 25px; padding: 2px 0 0 9px; border-top: 1px solid #dcdee2; }
.status .bar { height: 14px; background: #e2e4e8; }
.status .caret { margin-left: 0; }
.status .first { width: 56px; }
.status .count { width: 73px; padding-left: 8px; }
.check { width: 85px; padding-left: 3px; gap: 3px; }
.proof { width: 87px; padding-left: 8px; }
.fonts { padding-left: 17px; }
.views { display: flex; align-items: center; align-self: stretch; margin: 0 3px 0 auto; }
.eye { padding-right: 13px; }
.view { justify-content: center; align-self: stretch; width: 26px; }
.eye + .bar { margin-right: 11px; }
.view.on { width: 24px; margin-right: 1px; background: #d9dde6; }
.view + .bar { margin: 0 14px 0 9px; }
.zoom { gap: 5px; margin: 0 9px 0 7px; }
.views input { width: 140px; height: 16px; margin: 0 6px 0 9px; appearance: none; background: linear-gradient(90deg, #4c5166 43%, #c3c6cf 43%) center / 100% 1px no-repeat; }
.views input::-webkit-slider-thumb { appearance: none; width: 12px; height: 12px; border: 1px solid #3c4152; border-radius: 50%; background: #fff; }
.fullscreen { margin-left: 10px; }

.brand { position: absolute; right: 11px; bottom: 6px; z-index: 6; display: flex; align-items: flex-end; pointer-events: none; opacity: 0.75; }
.brand svg { margin-bottom: 4px; }
.brand div { display: flex; flex-direction: column; }
.brand strong { font-size: 21px; line-height: 24px; font-weight: 500; color: #5b9be0; }
.brand span { font: 17px/20px "Liberation Sans", sans-serif; color: #4bb96a; }
.pointers { position: absolute; top: 0; left: 0; z-index: 7; pointer-events: none; }
.arrows { filter: drop-shadow(2px 3px 2px rgba(0, 0, 0, 0.5)); }
</style>
